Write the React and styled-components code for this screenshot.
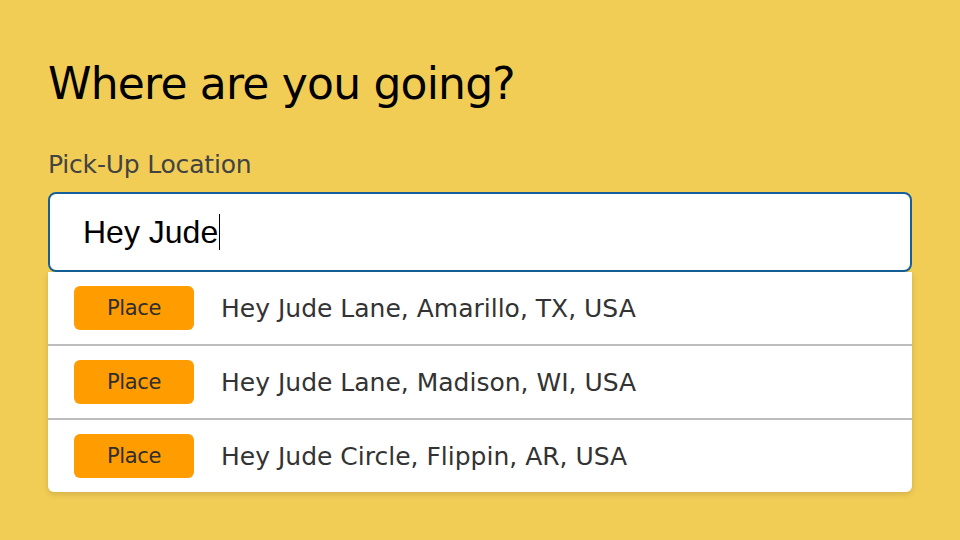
import React from "react";
import styled, { createGlobalStyle } from "styled-components";

const GlobalStyle = createGlobalStyle`
    html, body {
        margin : 0;
        padding : 0;
        background-color : #f2cd55;
    }
    body {
        font-family : "DejaVu Sans", Verdana, sans-serif;
    }
`;

const places = [
    "Hey Jude Lane, Amarillo, TX, USA",
    "Hey Jude Lane, Madison, WI, USA",
    "Hey Jude Circle, Flippin, AR, USA",
];

const App = () => {
    return (
        <>
            <GlobalStyle />
            <Page>
                <Title>Where are you going?</Title>
                <Label>Pick-Up Location</Label>
                <SearchBox>
                    <SearchText>Hey Jude</SearchText>
                    <Caret />
                </SearchBox>
                <Suggestions>
                    {places.map((place) => (
                        <SuggestionRow key={place}>
                            <Badge>Place</Badge>
                            <Address>{place}</Address>
                        </SuggestionRow>
                    ))}
                </Suggestions>
            </Page>
        </>
    );
};

const Page = styled.div`
    width : 960px;
    height : 540px;
    padding : 57px 48px 0 48px;
    box-sizing : border-box;
    display : flex;
    flex-direction : column;
`;

const Title = styled.h1`
    margin : 0;
    font-size : 44px;
    font-weight : 400;
    line-height : 54px;
    color : #000;
    letter-spacing : -0.8px;
`;

const Label = styled.div`
    margin-top : 39px;
    font-size : 25px;
    line-height : 30px;
    color : #434343;
    letter-spacing : -0.2px;
`;

const SearchBox = styled.div`
    margin-top : 12px;
    height : 80px;
    box-sizing : border-box;
    border : 2px solid #15609a;
    border-radius : 8px;
    background-color : #fff;
    display : flex;
    align-items : center;
    padding-left : 33px;
`;

const SearchText = styled.span`
    font-family : "Liberation Sans", Arial, sans-serif;
    font-size : 32px;
    color : #000;
`;

const Caret = styled.span`
    width : 1px;
    height : 36px;
    margin-left : 1px;
    background-color : #000;
`;

const Suggestions = styled.div`
    background-color : #fff;
    border-radius : 0 0 6px 6px;
    box-shadow : 0 2px 6px rgba(0, 0, 0, 0.15);
    overflow : hidden;
`;

const SuggestionRow = styled.div`
    height : 74px;
    box-sizing : border-box;
    display : flex;
    align-items : center;
    padding-left : 26px;
    border-bottom : 2px solid #bdbdbd;
    &:last-child{
        height : 72px;
        border-bottom : none;
    }
`;

const Badge = styled.div`
    width : 120px;
    height : 44px;
    border-radius : 6px;
    background-color : #ff9c00;
    color : #2e2e2e;
    font-size : 21px;
    display : flex;
    align-items : center;
    justify-content : center;
    letter-spacing : -0.4px;
`;

const Address = styled.div`
    margin-left : 27px;
    font-size : 25px;
    color : #333;
`;

export default App;
